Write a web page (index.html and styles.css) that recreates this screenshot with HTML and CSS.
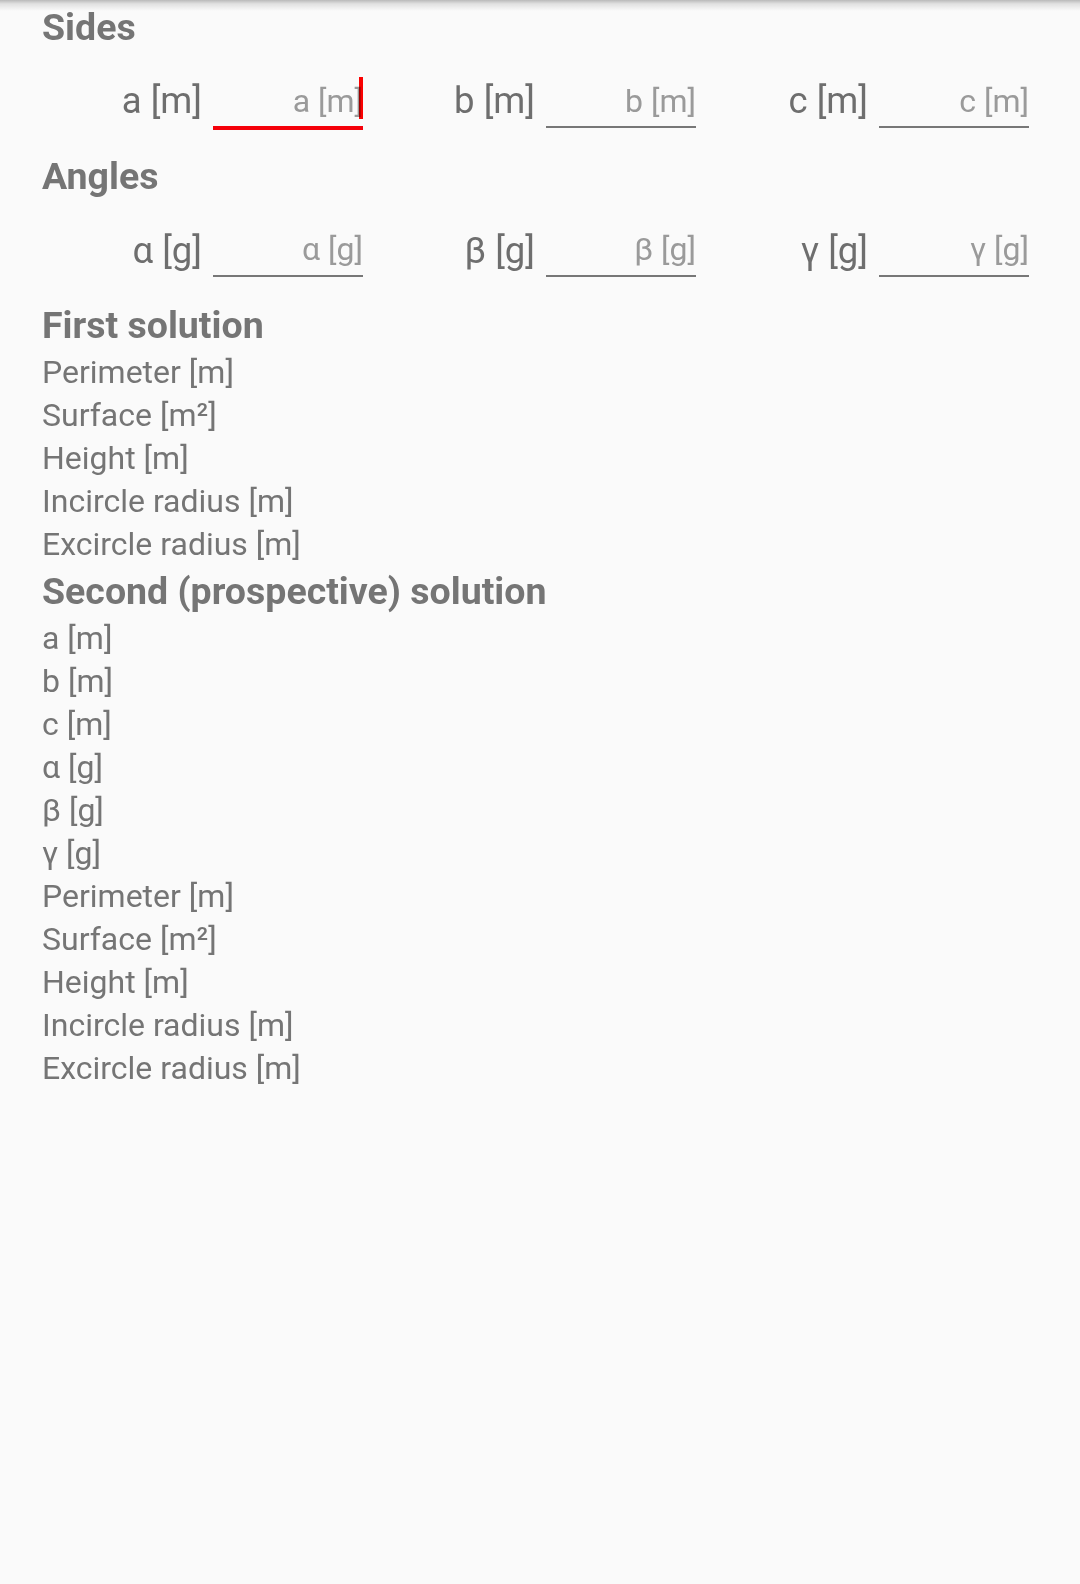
FILE: index.html
```html
<!DOCTYPE html>
<html lang="en">
<head>
<meta charset="utf-8">
<title>Triangle solver</title>
<link rel="stylesheet" href="styles.css">
</head>
<body>
<div class="shadow"></div>
<main class="page">
  <h2 class="heading sides">Sides</h2>
  <div class="inputs">
    <label class="cell"><span class="label">a [m]</span><span class="field focused"><input placeholder="a [m]"><span class="caret"></span></span></label>
    <label class="cell"><span class="label">b [m]</span><span class="field"><input placeholder="b [m]"></span></label>
    <label class="cell"><span class="label">c [m]</span><span class="field"><input placeholder="c [m]"></span></label>
  </div>

  <h2 class="heading angles">Angles</h2>
  <div class="inputs angle-row">
    <label class="cell"><span class="label">α [g]</span><span class="field"><input placeholder="α [g]"></span></label>
    <label class="cell"><span class="label">β [g]</span><span class="field"><input placeholder="β [g]"></span></label>
    <label class="cell"><span class="label">γ [g]</span><span class="field"><input placeholder="γ [g]"></span></label>
  </div>

  <h2 class="heading solution">First solution</h2>
  <ul class="results">
    <li>Perimeter [m]</li>
    <li>Surface [m²]</li>
    <li>Height [m]</li>
    <li>Incircle radius [m]</li>
    <li>Excircle radius [m]</li>
  </ul>

  <h2 class="heading second">Second (prospective) solution</h2>
  <ul class="results">
    <li>a [m]</li>
    <li>b [m]</li>
    <li>c [m]</li>
    <li>α [g]</li>
    <li>β [g]</li>
    <li>γ [g]</li>
    <li>Perimeter [m]</li>
    <li>Surface [m²]</li>
    <li>Height [m]</li>
    <li>Incircle radius [m]</li>
    <li>Excircle radius [m]</li>
  </ul>
</main>
</body>
</html>
```

FILE: styles.css
```css
html, body {
  margin: 0;
  padding: 0;
  background: #fafafa;
}

body {
  position: relative;
  min-height: 1584px;
  font-family: Roboto, "Noto Sans", "Liberation Sans", sans-serif;
  color: #757575;
}

.shadow {
  position: absolute;
  left: 0;
  top: 0;
  right: 0;
  height: 11px;
  background: linear-gradient(to bottom, rgba(0,0,0,0.26), rgba(0,0,0,0.10) 35%, rgba(0,0,0,0));
  pointer-events: none;
}

.page {
  padding: 4px 42px 0 42px;
}

.heading {
  margin: 0 0 3px 0;
  font-size: 37.5px;
  line-height: 46px;
  font-weight: 700;
  color: #757575;
}

.heading.sides {
  margin-bottom: 0;
}

.heading.angles {
  margin-top: 25px;
  margin-bottom: 0;
}

.heading.solution {
  margin-top: 25px;
}

.heading.second {
  margin-top: 2px;
}

.inputs {
  display: grid;
  grid-template-columns: repeat(3, 333px);
  margin-left: -12px;
}

.cell {
  display: flex;
  justify-content: flex-end;
  align-items: flex-end;
  gap: 11px;
}

.label {
  font-size: 36.5px;
  line-height: 40px;
  margin-bottom: 7px;
  color: #6e6e6e;
  white-space: nowrap;
}

.angle-row .label {
  margin-bottom: 6px;
}

.field {
  position: relative;
  display: block;
  width: 150px;
}

.field input {
  display: block;
  box-sizing: border-box;
  width: 150px;
  height: 78px;
  margin: 0;
  padding: 25px 0 0 0;
  border: none;
  border-bottom: 2px solid #777777;
  background: transparent;
  font-family: Roboto, "Noto Sans", "Liberation Sans", sans-serif;
  font-size: 32px;
  color: #6e6e6e;
  text-align: right;
  outline: none;
}

.angle-row .field input {
  height: 78px;
  padding-top: 24px;
}

.field input::placeholder {
  color: #9a9a9a;
  opacity: 1;
}

.field.focused input {
  border-bottom-color: #f5000a;
  box-shadow: 0 2px 0 #f5000a;
}

.caret {
  position: absolute;
  right: 0;
  top: 27px;
  width: 4px;
  height: 42px;
  background: #ff0000;
  mix-blend-mode: multiply;
}

.results {
  list-style: none;
  margin: 0;
  padding: 0;
}

.results li {
  font-size: 32px;
  line-height: 43px;
  color: #757575;
}
```
